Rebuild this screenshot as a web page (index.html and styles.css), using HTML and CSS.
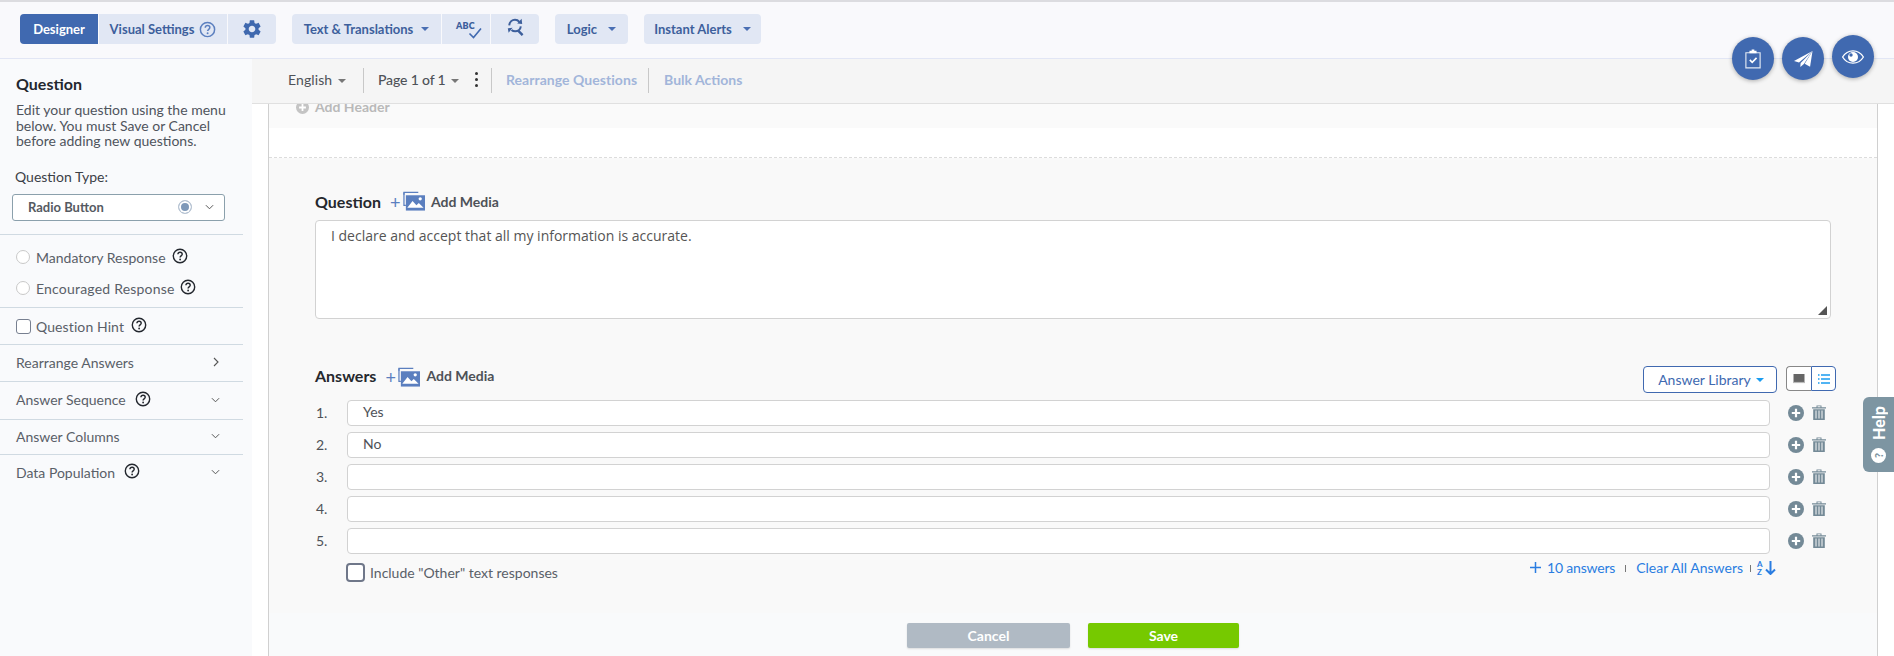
FILE: index.html
```html
<!DOCTYPE html>
<html lang="en">
<head>
<meta charset="utf-8">
<title>Question Designer</title>
<link rel="stylesheet" href="styles.css">
</head>
<body>
<svg class="defs" width="0" height="0">
  <symbol id="help" viewBox="0 0 16 16"><circle cx="8" cy="8" r="6.7" fill="none" stroke="currentColor" stroke-width="1.4"/><path d="M5.9 6.3C6 4.9 7 4.3 8.1 4.3c1.2 0 2.1.8 2.1 1.9 0 1.6-2.1 1.7-2.1 3.3" fill="none" stroke="currentColor" stroke-width="1.4"/><circle cx="8.1" cy="11.5" r=".9" fill="currentColor"/></symbol>
  <symbol id="plusc" viewBox="0 0 16 16"><circle cx="8" cy="8" r="8" fill="currentColor"/><path d="M8 3.8v8.4M3.8 8h8.4" stroke="#fff" stroke-width="2.2"/></symbol>
  <symbol id="trash" viewBox="0 0 14 15"><path d="M0 2.2h14v1.4H0zM4.5 2.2V.4h5v1.8h-1V1.3h-3v.9zM1.2 4.2h11.6V15H1.2z" fill="currentColor"/><path d="M4 5.5v8M7 5.5v8M10 5.5v8" stroke="#f9f9f9" stroke-width="1"/></symbol>
  <symbol id="media" viewBox="0 0 23 20"><path d="M1 3.5V1h15" fill="none" stroke="#5b7fbf" stroke-width="1.3"/><path d="M1 1v13.5h2" fill="none" stroke="#5b7fbf" stroke-width="1.3"/><path d="M3 4h20v16H3z" fill="#5b7fbf"/><path d="M4.5 17l5.5-7 4 4.5 2.5-2.5 5 5z" fill="#fff"/><circle cx="18" cy="7.7" r="1.7" fill="#fff"/></symbol>
  <symbol id="chev" viewBox="0 0 10 6"><path d="M1 1l4 4 4-4" fill="none" stroke="currentColor" stroke-width="1.1"/></symbol>
</svg>

<header class="topbar">
  <div class="tab-group">
    <span class="tab tab-active tab-designer">Designer</span>
    <span class="tab tab-visual">Visual Settings <svg class="ico-help-blue"><use href="#help"/></svg></span>
    <span class="tab tab-icon"><svg class="ico-gear" viewBox="0 0 24 24"><path fill="currentColor" d="M19.14 12.94c.04-.3.06-.61.06-.94 0-.32-.02-.64-.07-.94l2.03-1.58c.18-.14.23-.41.12-.61l-1.92-3.32c-.12-.22-.37-.29-.59-.22l-2.39.96c-.5-.38-1.03-.7-1.62-.94l-.36-2.54c-.04-.24-.24-.41-.48-.41h-3.84c-.24 0-.43.17-.47.41l-.36 2.54c-.59.24-1.13.57-1.62.94l-2.39-.96c-.22-.08-.47 0-.59.22L2.74 8.87c-.12.21-.08.47.12.61l2.03 1.58c-.05.3-.09.63-.09.94s.02.64.07.94l-2.03 1.58c-.18.14-.23.41-.12.61l1.92 3.32c.12.22.37.29.59.22l2.39-.96c.5.38 1.03.7 1.62.94l.36 2.54c.05.24.24.41.48.41h3.84c.24 0 .44-.17.47-.41l.36-2.54c.59-.24 1.13-.56 1.62-.94l2.39.96c.22.08.47 0 .59-.22l1.92-3.32c.12-.22.07-.47-.12-.61l-2.01-1.58zM12 15.6c-1.98 0-3.6-1.62-3.6-3.6s1.62-3.6 3.6-3.6 3.6 1.62 3.6 3.6-1.62 3.6-3.6 3.6z"/></svg></span>
  </div>
  <div class="tab-group">
    <span class="tab tab-text">Text &amp; Translations <i class="caret"></i></span>
    <span class="tab tab-icon tab-abc"><span class="abc">ABC</span><svg class="ico-abc" viewBox="0 0 14 12"><path d="M1.5 6.5l4 4L13 1.5" fill="none" stroke="currentColor" stroke-width="1.6"/></svg></span>
    <span class="tab tab-icon"><svg class="ico-refresh" viewBox="0 0 18 20"><path d="M3.2 8.4C3.5 4.8 6.2 2.8 9 2.8c1.8 0 3.3.8 4.3 2.1M14.8 9.4c-.3 2.9-2.7 4.9-5.6 4.9-1.5 0-2.7-.5-3.7-1.4" fill="none" stroke="currentColor" stroke-width="2"/><path d="M11.2 6.4l5 .6-.6-5.2zM6.6 10.8l-4.8.4.8 4.6z" fill="currentColor"/><path d="M12.4 13.8l4.2 4.4" stroke="currentColor" stroke-width="2.4"/></svg></span>
  </div>
  <div class="tab-group"><span class="tab tab-logic">Logic <i class="caret"></i></span></div>
  <div class="tab-group"><span class="tab tab-alerts">Instant Alerts <i class="caret"></i></span></div>
</header>

<div class="fab fab-clip"><svg viewBox="0 0 18 22"><path d="M1 4h16v17H1z" fill="none" stroke="#fff" stroke-width="1.3" opacity=".85"/><path d="M5 1.8h8v2.6H5zM7.5.2h3v2h-3z" fill="#fff"/><path d="M5.4 12l2.7 2.7 4.9-5" fill="none" stroke="#fff" stroke-width="1.8"/></svg></div>
<div class="fab fab-send"><svg viewBox="0 0 20 18"><path d="M19.5.5L0 11l5.3 1.8z" fill="#fff"/><path d="M19.5.5L7 13.2l-.4 4.2 3.8-3.1z" fill="#fff"/><path d="M19.5.5L11.3 14l5.6 3.2z" fill="#fff"/></svg></div>
<div class="fab fab-eye"><svg viewBox="0 0 22 14"><path d="M.6 7C3 3 6.800.8 11 .8S19 3 21.400 7c-2.400 4-6.200 6.200-10.400 6.200S3 11 .6 7z" fill="none" stroke="#fff" stroke-width="1.3"/><circle cx="11" cy="7" r="5" fill="#fff"/><circle cx="9" cy="5" r="1.700" fill="#4069b0"/></svg></div>

<div class="help-tab"><span class="help-q">?</span><span class="help-word">Help</span></div>

<div class="main">
  <aside class="sidebar">
    <section class="side-intro">
      <h2 class="side-title">Question</h2>
      <p class="side-text">Edit your question using the menu below. You must Save or Cancel before adding new questions.</p>
      <div class="type-label">Question Type:</div>
      <div class="type-select">
        <span class="type-name">Radio Button</span>
        <span class="type-radio"></span>
        <svg class="chev chev-select"><use href="#chev"/></svg>
      </div>
    </section>
    <section class="side-block side-radios">
      <div class="opt"><span class="radio"></span>Mandatory Response<svg class="q"><use href="#help"/></svg></div>
      <div class="opt opt-second"><span class="radio"></span>Encouraged Response<svg class="q"><use href="#help"/></svg></div>
    </section>
    <section class="side-block side-hint">
      <div class="opt"><span class="check"></span>Question Hint<svg class="q"><use href="#help"/></svg></div>
    </section>
    <div class="acc acc-a"><span>Rearrange Answers</span><svg class="chev chev-right" viewBox="0 0 6 10"><path d="M1 1l4 4-4 4" fill="none" stroke="currentColor" stroke-width="1.1"/></svg></div>
    <div class="acc acc-b"><span>Answer Sequence</span><svg class="q q-acc"><use href="#help"/></svg><svg class="chev"><use href="#chev"/></svg></div>
    <div class="acc acc-c"><span>Answer Columns</span><svg class="chev"><use href="#chev"/></svg></div>
    <div class="acc acc-d acc-last"><span>Data Population</span><svg class="q q-acc"><use href="#help"/></svg><svg class="chev"><use href="#chev"/></svg></div>
  </aside>

  <div class="workspace">
    <div class="subbar">
      <span class="sub-lang">English <i class="caret caret-grey"></i></span>
      <span class="sub-div sub-div-a"></span>
      <span class="sub-page">Page 1 of 1 <i class="caret caret-grey"></i></span>
      <span class="dots"><i></i><i></i><i></i></span>
      <span class="sub-div sub-div-b"></span>
      <span class="sub-link sub-link-a">Rearrange Questions</span>
      <span class="sub-div sub-div-c"></span>
      <span class="sub-link sub-link-b">Bulk Actions</span>
    </div>
    <div class="canvas">
      <div class="panel">
        <div class="header-strip"><svg class="add-head-ico"><use href="#plusc"/></svg><span>Add Header</span></div>
        <div class="white-gap"></div>
        <div class="editor">
          <div class="q-head">
            <span class="label">Question</span>
            <span class="media-plus media-plus-q">+</span><svg class="media-ico"><use href="#media"/></svg>
            <span class="media-text">Add Media</span>
          </div>
          <div class="q-box">I declare and accept that all my information is accurate.<svg class="grip" viewBox="0 0 9 9"><path d="M9 0v9H0z" fill="#555"/></svg></div>

          <div class="a-head">
            <span class="label">Answers</span>
            <span class="media-plus">+</span><svg class="media-ico"><use href="#media"/></svg>
            <span class="media-text">Add Media</span>
            <span class="a-lib">Answer Library <i class="caret caret-blue"></i></span>
            <span class="toggle">
              <span class="tog tog-a"><svg viewBox="0 0 12 10" class="tog-card"><path d="M.5 0h11v8H.5z" fill="#666"/><path d="M0 8.500h12" stroke="#bbb" stroke-width="1.2"/></svg></span>
              <span class="tog tog-b"><svg viewBox="0 0 12 10" class="tog-list"><path d="M3 1h9M3 5h9M3 9h9M0 1h1.500M0 5h1.500M0 9h1.500" stroke="#1a9cf0" stroke-width="1.500"/></svg></span>
            </span>
          </div>

          <div class="rows">
            <div class="a-row"><span class="num">1.</span><span class="a-input">Yes</span><svg class="row-plus"><use href="#plusc"/></svg><svg class="row-trash"><use href="#trash"/></svg></div>
            <div class="a-row"><span class="num">2.</span><span class="a-input">No</span><svg class="row-plus"><use href="#plusc"/></svg><svg class="row-trash"><use href="#trash"/></svg></div>
            <div class="a-row"><span class="num">3.</span><span class="a-input"></span><svg class="row-plus"><use href="#plusc"/></svg><svg class="row-trash"><use href="#trash"/></svg></div>
            <div class="a-row"><span class="num">4.</span><span class="a-input"></span><svg class="row-plus"><use href="#plusc"/></svg><svg class="row-trash"><use href="#trash"/></svg></div>
            <div class="a-row"><span class="num">5.</span><span class="a-input"></span><svg class="row-plus"><use href="#plusc"/></svg><svg class="row-trash"><use href="#trash"/></svg></div>
          </div>

          <div class="a-foot">
            <span class="other-check"></span>
            <span class="other-text">Include "Other" text responses</span>
            <span class="foot-links">
              <svg class="link-plus" viewBox="0 0 11 11"><path d="M5.500 0v11M0 5.500h11" stroke="currentColor" stroke-width="1.500"/></svg>
              <span class="link-a">10 answers</span>
              <i class="link-sep link-sep-a"></i>
              <span class="link-b">Clear All Answers</span>
              <i class="link-sep link-sep-b"></i>
              <span class="az"><span class="az-letters">A<br>Z</span><svg class="az-arrow" viewBox="0 0 11 14"><path d="M5.500 0v13M1 8.500l4.500 4.500L10 8.500" fill="none" stroke="currentColor" stroke-width="2"/></svg></span>
            </span>
          </div>
        </div>
        <div class="footer">
          <span class="btn btn-cancel">Cancel</span>
          <span class="btn btn-save">Save</span>
        </div>
      </div>
    </div>
  </div>
</div>
</body>
</html>
```
FILE: styles.css
```css
* { box-sizing: border-box; }
html, body { margin: 0; height: 656px; overflow: hidden; background: #fff; }
body { font-family: "Lato", "Liberation Sans", sans-serif; color: #4a4f57; font-size: 14px; position: relative; }
.defs { position: absolute; }

.topbar { height: 59px; background: #f9f9fc; border-top: 2px solid #dcdce0; border-bottom: 1px solid #e2e6f5; display: flex; padding: 12px 0 0 20px; gap: 16px; }
.tab-group { display: flex; gap: 1px; height: 30px; }
.tab { background: #e1e7f4; color: #3d5f9c; font-size: 13px; font-weight: 700; display: flex; align-items: center; justify-content: center; height: 30px; white-space: nowrap; gap: 5px; }
.tab-group .tab:first-child { border-radius: 4px 0 0 4px; }
.tab-group .tab:last-child { border-radius: 0 4px 4px 0; }
.tab-group .tab:only-child { border-radius: 4px; }
.tab-active { background: #4069b0; color: #fff; }
.tab-designer { width: 78px; }
.tab-visual { width: 128px; }
.tab-icon { width: 48px; }
.tab-text { width: 149px; }
.tab-logic { width: 73px; gap: 8px; }
.tab-alerts { width: 117px; gap: 8px; }
.ico-help-blue { width: 17px; height: 17px; color: #5b7fbf; }
.ico-gear { width: 22px; height: 22px; color: #3f68ae; }
.ico-refresh { width: 18px; height: 20px; color: #3d5f9c; margin-top: -4px; }
.tab-abc { position: relative; }
.abc { font-size: 9px; font-weight: 800; position: absolute; left: 14px; top: 6px; letter-spacing: .2px; }
.ico-abc { width: 14px; height: 12px; color: #4069b0; position: absolute; left: 26px; top: 13px; }
.caret { display: inline-block; width: 0; height: 0; border-left: 4px solid transparent; border-right: 4px solid transparent; border-top: 4px solid #4a6fb3; margin-left: 3px; }
.caret-grey { border-top-color: #777; margin-left: 2px; vertical-align: 2px; }
.caret-blue { border-top-color: #1a9cf0; margin-left: 5px; }

.fab { position: absolute; width: 42px; height: 43px; top: 37px; border-radius: 50%; background: #4069b0; box-shadow: 0 1px 4px rgba(0,0,0,.3); display: flex; align-items: center; justify-content: center; z-index: 5; }
.fab-clip { left: 1732px; }
.fab-clip svg { width: 16px; height: 20px; }
.fab-send { left: 1782px; }
.fab-send svg { width: 19px; height: 18px; }
.fab-eye { left: 1832px; top: 35px; }
.fab-eye svg { width: 22px; height: 14px; }

.help-tab { position: absolute; left: 1863px; top: 397px; width: 31px; height: 75px; background: #7d95a2; border-radius: 6px 0 0 6px; z-index: 5; display: flex; flex-direction: column-reverse; align-items: center; justify-content: flex-start; gap: 8px; padding-bottom: 9px; color: #fff; }
.help-word { font-size: 16px; font-weight: 900; writing-mode: vertical-rl; transform: rotate(180deg); line-height: 1; }
.help-q { width: 15px; height: 15px; border-radius: 50%; background: #fff; color: #7d95a2; font-size: 11px; font-weight: 900; line-height: 15px; text-align: center; transform: rotate(-90deg); }

.main { display: flex; height: 597px; }
.sidebar { width: 252px; flex: none; background: #f9fafc; padding-right: 9px; }
.side-intro { padding: 16px 0 0 16px; height: 176px; border-bottom: 1px solid #d0dae2; }
.side-title { margin: 0; font-size: 16px; line-height: 18px; font-weight: 700; color: #23272e; }
.side-text { margin: 9px 0 0; font-size: 14px; line-height: 15.500px; color: #4f545c; width: 215px; }
.type-label { margin: 19px 0 0 -1px; font-size: 14px; line-height: 18px; color: #3b4047; }
.type-select { margin: 8px 0 0 -4px; width: 213px; height: 27px; background: #fff; border: 1px solid #8ba0ac; border-radius: 3px; display: flex; align-items: center; padding-left: 15px; }
.type-name { font-size: 13px; font-weight: 700; color: #555a62; flex: 1; }
.type-radio { width: 14px; height: 14px; border-radius: 50%; background: #7e98b8; border: 1px solid #b9c5d3; box-shadow: inset 0 0 0 2px #fff; margin-right: 13px; }
.chev { width: 9px; height: 6px; color: #555; }
.chev-select { margin-right: 10px; }

.side-block { padding-left: 16px; border-bottom: 1px solid #d0dae2; }
.side-radios { height: 73px; padding-top: 12px; }
.side-hint { height: 37px; padding-top: 8px; }
.opt { display: flex; align-items: center; height: 20px; font-size: 14px; color: #5a6068; }
.opt-second { margin-top: 11px; letter-spacing: .2px; }
.radio { width: 14px; height: 14px; border: 1px solid #c9c9c9; border-radius: 50%; background: #fff; margin-right: 6px; }
.check { width: 15px; height: 15px; border: 1.500px solid #777f90; border-radius: 3px; background: #fff; margin-right: 5px; }
.q { width: 16px; height: 16px; color: #23272e; margin: -2px 0 0 6px; }
.opt-second .q { margin-left: 5px; }
.side-hint .opt { letter-spacing: .1px; }
.side-hint .q { margin-left: 7px; }
.acc { display: flex; align-items: center; padding: 0 23px 2px 16px; font-size: 14px; color: #5a6068; border-bottom: 1px solid #d0dae2; }
.acc span { margin-right: auto; }
.acc-a { height: 37px; }
.acc-b { height: 38px; }
.acc-c { height: 35px; }
.acc-d { height: 36px; }
.acc-b span, .acc-d span { margin-right: 0; }
.acc .q-acc { margin-left: 9px; margin-right: auto; }
.acc-last { border-bottom: none; }
.chev-right { width: 6px; height: 10px; margin-right: 1px; }

.workspace { flex: 1; display: flex; flex-direction: column; min-width: 0; }
.subbar { height: 45px; flex: none; background: #f5f5f5; border-bottom: 1px solid #e0e0e0; display: flex; align-items: center; padding: 0 0 3px 36px; font-size: 14px; color: #4e5258; position: relative; z-index: 2; }
.sub-lang { width: 75px; letter-spacing: .1px; }
.sub-div { width: 1px; height: 25px; background: #c8c8c8; margin-top: 1px; }
.sub-page { margin-left: 14px; font-weight: 500; letter-spacing: -.15px; }
.dots { display: flex; flex-direction: column; gap: 3px; margin-left: 16px; }
.dots i { width: 3px; height: 3px; border-radius: 50%; background: #333; display: block; }
.sub-div-b { margin-left: 13px; }
.sub-link { color: #a2b5da; font-weight: 700; margin-top: -1px; }
.sub-link-a { margin-left: 14px; letter-spacing: .05px; }
.sub-div-c { margin-left: 11px; }
.sub-link-b { margin-left: 15px; }

.canvas { flex: 1; padding: 0 16px 0 16px; background: #fff; min-height: 0; }
.panel { height: 100%; border-left: 1px solid #d0d0d0; border-right: 1px solid #d0d0d0; display: flex; flex-direction: column; background: #f9fafb; }
.header-strip { height: 24px; flex: none; background: #fafafa; padding-left: 27px; display: flex; align-items: flex-start; overflow: hidden; color: #b9b9b9; font-size: 14px; font-weight: 700; gap: 6px; }
.header-strip span { margin-top: -6px; line-height: 18px; }
.add-head-ico { width: 13px; height: 13px; margin-top: -3px; color: #c4c4c4; }
.white-gap { height: 30px; flex: none; background: #fff; border-bottom: 1px dashed #dcdcdc; }
.editor { height: 455px; flex: none; background: #f9f9f9; padding: 31px 46px 0 46px; }
.q-head, .a-head { display: flex; align-items: center; }
.q-head { height: 24px; }
.label { font-size: 16px; font-weight: 700; color: #25282d; }
.media-plus { font-size: 18px; line-height: 20px; font-weight: 400; color: #5b7fbf; margin: 3px 3px 0 9px; width: 10px; font-family: "Liberation Sans", sans-serif; }
.media-ico { width: 22px; height: 20px; margin-left: 0; }
.media-text { font-size: 14px; font-weight: 700; color: #4e5258; margin-left: 6px; }
.q-box { position: relative; height: 99px; margin-top: 7px; background: #fff; border: 1px solid #d2d2d2; border-radius: 4px; padding: 5px 15px; font-family: "Open Sans", sans-serif; font-size: 14px; line-height: 19px; color: #555; }
.grip { position: absolute; right: 3px; bottom: 3px; width: 9px; height: 9px; }

.a-head { height: 27px; margin-top: 47px; margin-right: -5px; }
.a-head .label, .a-head .media-text { margin-top: -8px; }
.a-head .media-plus { margin-top: -3px; }
.a-head .media-ico { margin-top: -6px; }
.a-lib { margin-left: auto; width: 134px; height: 27px; background: #fff; border: 1px solid #4069b0; border-radius: 4px; color: #4069b0; font-size: 14px; display: flex; align-items: center; justify-content: center; padding-left: 2px; }
.toggle { margin-left: 9px; width: 50px; height: 25px; margin-top: -2px; display: flex; background: #fff; }
.tog { width: 25px; height: 25px; display: flex; align-items: center; justify-content: center; }
.tog-a { border: 1px solid #888; border-radius: 4px 0 0 4px; border-right: none; }
.tog-b { border: 1px solid #4069b0; border-radius: 0 4px 4px 0; }
.tog-card, .tog-list { width: 12px; height: 10px; }

.rows { margin-top: 7px; display: flex; flex-direction: column; gap: 6px; }
.a-row { display: flex; align-items: center; height: 26px; }
.num { width: 32px; flex: none; color: #4e5258; font-size: 14px; padding: 0 0 2px 1px; }
.a-input { flex: 1; height: 26px; background: #fff; border: 1px solid #d2d2d2; border-radius: 4px; padding-left: 15px; font-size: 14px; line-height: 21px; color: #4e5258; }
.row-plus { width: 16px; height: 16px; color: #748a97; margin: -1px 0 0 18px; }
.row-trash { width: 14px; height: 15px; color: #748a97; margin: -2px 5px 0 8px; }

.a-foot { display: flex; margin-top: 9px; padding-left: 31px; padding-right: 55px; height: 20px; }
.other-check { width: 19px; height: 19px; border: 2px solid #6f7789; border-radius: 4px; background: #fff; }
.other-text { margin-left: 5px; font-size: 14px; line-height: 20px; color: #5a6068; }
.foot-links { margin-left: auto; margin-top: -4px; display: flex; align-items: center; height: 17px; color: #2a7de1; font-size: 14px; }
.link-plus { width: 11px; height: 11px; }
.link-a { margin-left: 6px; letter-spacing: -.2px; }
.link-sep { width: 1px; height: 7px; background: #777; display: block; margin-top: 2px; }
.link-sep-a { margin-left: 10px; }
.link-b { margin-left: 10px; }
.link-sep-b { margin-left: 7px; }
.az { margin-left: 6px; display: flex; align-items: center; }
.az-letters { font-size: 8px; line-height: 8px; font-weight: 700; width: 8px; }
.az-arrow { width: 11px; height: 14px; }

.footer { flex: 1; display: flex; justify-content: flex-start; padding: 10px 0 0 638px; gap: 18px; }
.btn { height: 25px; color: #fff; font-weight: 700; font-size: 14px; display: flex; align-items: center; justify-content: center; border-radius: 2px; box-shadow: 0 1px 2px rgba(0,0,0,.12); }
.btn-cancel { width: 163px; background: #b0bac4; }
.btn-save { width: 151px; background: #76c900; }
```
